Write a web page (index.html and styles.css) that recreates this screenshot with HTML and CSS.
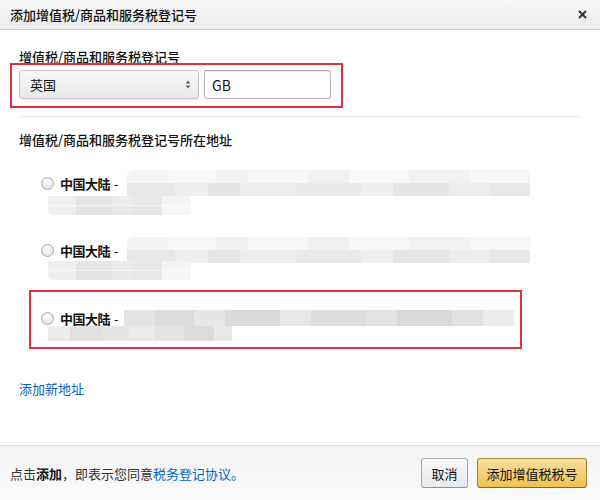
FILE: index.html
```html
<!DOCTYPE html>
<html lang="zh-CN">
<head>
<meta charset="utf-8">
<title>添加增值税/商品和服务税登记号</title>
<link rel="stylesheet" href="styles.css">
</head>
<body>
<div class="dialog">
  <div class="header">
    <span class="title">添加增值税/商品和服务税登记号</span>
    <svg class="close" width="9" height="9" viewBox="0 0 9 9"><path d="M1 1L8 8M8 1L1 8" stroke="#333" stroke-width="2" fill="none"/></svg>
  </div>
  <div class="content">
    <div class="label">增值税/商品和服务税登记号</div>
    <div class="mark row">
      <div class="select">
        <span>英国</span>
        <svg width="6" height="9" viewBox="0 0 6 9"><path d="M3 0.5L5.5 3.5H0.5Z M3 8.5L5.5 5.5H0.5Z" fill="#666"/></svg>
      </div>
      <div class="input">GB</div>
    </div>
    <div class="sep"></div>
    <div class="label label2">增值税/商品和服务税登记号所在地址</div>

    <div class="addr a1">
      <div class="line1"><span class="radio"></span><b class="name">中国大陆</b><span class="dash">-</span><span class="blur b1"></span></div>
      <div class="line2"><span class="blur b2"></span></div>
    </div>
    <div class="addr a2">
      <div class="line1"><span class="radio"></span><b class="name">中国大陆</b><span class="dash">-</span><span class="blur b1"></span></div>
      <div class="line2"><span class="blur b2 b2b"></span></div>
    </div>
    <div class="mark mark2">
      <div class="addr a3">
        <div class="line1"><span class="radio"></span><b class="name">中国大陆</b><span class="dash">-</span><span class="blur b3"></span></div>
        <div class="line2"><span class="blur b4"></span></div>
      </div>
    </div>
    <a class="link addnew">添加新地址</a>
  </div>
  <div class="footer">
    <div class="note">点击<b>添加</b>，即表示您同意<a class="link">税务登记协议。</a></div>
    <div class="buttons">
      <span class="btn cancel">取消</span>
      <span class="btn primary">添加增值税税号</span>
    </div>
  </div>
</div>
</body>
</html>
```
FILE: styles.css
```css
html, body {
  margin: 0;
  padding: 0;
  background: #fff;
}
body {
  font-family: "Noto Sans CJK SC", "Liberation Sans", sans-serif;
  font-size: 13px;
  color: #111;
}
.dialog {
  width: 600px;
  height: 500px;
  display: flex;
  flex-direction: column;
}
.header {
  height: 29px;
  flex: none;
  display: flex;
  align-items: center;
  justify-content: space-between;
  padding: 0 13px 0 10px;
  background: linear-gradient(#f7f7f7, #ececec);
  border-bottom: 1px solid #cfcfcf;
}
.title {
  font-size: 13px;
  line-height: 16px;
  color: #111;
  font-weight: 500;
}
.content {
  flex: 1;
  padding: 20px 20px 0 19px;
  display: flex;
  flex-direction: column;
  align-items: flex-start;
}
.label {
  font-size: 13px;
  line-height: 13px;
  height: 13px;
  font-weight: 500;
}
.mark {
  border: 2px solid #e0313a;
}
.row {
  margin-left: -9px;
  display: flex;
  gap: 5px;
  padding: 5px 10px 7px 7px;
}
.select {
  width: 180px;
  height: 29px;
  box-sizing: border-box;
  border: 1px solid #c6c6c6;
  border-radius: 3px;
  background: linear-gradient(#f8f8f8, #e9e9e9);
  box-shadow: 0 1px 0 rgba(0,0,0,0.06);
  display: flex;
  align-items: center;
  justify-content: space-between;
  padding: 0 7px 0 10px;
}
.input {
  width: 127px;
  height: 29px;
  box-sizing: border-box;
  border: 1px solid #b8b8b8;
  border-top-color: #a6a6a6;
  border-radius: 3px;
  box-shadow: inset 0 1px 1px rgba(0,0,0,0.08);
  background: #fff;
  display: flex;
  align-items: center;
  padding-left: 7px;
  font-size: 14px;
}
.sep {
  align-self: stretch;
  height: 1px;
  background: #e7e7e7;
  margin-top: 8px;
}
.label2 {
  margin-top: 16px;
}
.addr {
  display: flex;
  flex-direction: column;
  margin-left: 22px;
}
.a1 { margin-top: 24px; }
.a2 { margin-top: 22px; }
.line1 {
  display: flex;
  align-items: center;
  height: 26px;
}
.radio {
  width: 11px;
  height: 11px;
  border-radius: 50%;
  border: 1px solid #a9a9a9;
  background: radial-gradient(circle at 50% 35%, #fdfdfd, #dcdcdc);
  flex: none;
}
.name {
  margin-left: 6px;
  font-weight: 700;
  font-size: 13px;
  letter-spacing: -0.5px;
}
.dash {
  margin-left: 4px;
  margin-right: 8px;
}
.line2 {
  margin-left: 7px;
  display: flex;
}
.blur {
  display: block;
}
.b1 {
  width: 403px;
  height: 26px;
  border-radius: 6px 0 0 0;
  background:
    linear-gradient(90deg, #f3f3f3 0 10%, #f7f7f7 10% 22%, #f1f1f1 22% 30%, #f6f6f6 30% 45%, #f0f0f0 45% 55%, #f7f7f7 55% 70%, #f2f2f2 70% 85%, #f6f6f6 85%) top/100% 50% no-repeat,
    linear-gradient(90deg, #e8e8e8 0 12%, #eeeeee 12% 20%, #e6e6e6 20% 28%, #ededed 28% 42%, #eaeaea 42% 58%, #efefef 58% 66%, #e6e6e6 66% 80%, #ededed 80% 90%, #e8e8e8 90%) bottom/100% 50% no-repeat;
}
.b2 {
  width: 142px;
  height: 19px;
  background:
    linear-gradient(90deg, #eeeeee 0 20%, #e5e5e5 20% 45%, #ececec 45% 60%, #e8e8e8 60% 80%, #f3f3f3 80%) top/100% 50% no-repeat,
    linear-gradient(90deg, #efefef 0 20%, #e4e4e4 20% 45%, #eaeaea 45% 60%, #e7e7e7 60% 80%, #f5f5f5 80%) bottom/100% 50% no-repeat;
  border-radius: 0 0 0 6px;
}
.b2b {
  margin-top: -2px;
}
.mark2 {
  margin-top: 10px;
  margin-left: 10px;
  width: 489px;
  padding: 18px 0 6px 0;
}
.a3 {
  margin-left: 10px;
}
.mark2 .line1 {
  height: 16px;
}
.b3 {
  width: 390px;
  height: 16px;
  margin-left: -3px;
  background: linear-gradient(90deg, #e4e4e4 0 8%, #dcdcdc 8% 18%, #e6e6e6 18% 26%, #dadada 26% 40%, #e7e7e7 40% 48%, #dddddd 48% 62%, #e3e3e3 62% 70%, #d9d9d9 70% 84%, #e1e1e1 84% 92%, #ebebeb 92%);
}
.b4 {
  width: 184px;
  height: 15px;
  background: linear-gradient(90deg, #ececec 0 12%, #e0e0e0 12% 30%, #e6e6e6 30% 44%, #ececec 44% 58%, #e4e4e4 58% 74%, #dbdbdb 74% 90%, #e8e8e8 90%);
}
.link {
  color: #0066c0;
  text-decoration: none;
}
.addnew {
  margin-top: 32px;
  font-size: 13px;
  line-height: 16px;
}
.footer {
  height: 55px;
  flex: none;
  box-sizing: border-box;
  border-top: 1px solid #dddddd;
  background: linear-gradient(#f3f3f3, #fafafa);
  display: flex;
  align-items: center;
  justify-content: space-between;
  padding: 0 13px 0 10px;
}
.note {
  font-size: 13px;
  color: #333;
}
.note b {
  color: #111;
}
.buttons {
  display: flex;
  gap: 9px;
}
.btn {
  height: 30px;
  box-sizing: border-box;
  display: flex;
  align-items: center;
  justify-content: center;
  border-radius: 3px;
  font-size: 13px;
  color: #111;
  border: 1px solid;
}
.cancel {
  width: 47px;
  background: linear-gradient(#f7f8fa, #e7e9ec);
  border-color: #adb1b8 #a2a6ac #8d9096;
}
.primary {
  width: 110px;
  background: linear-gradient(#f7dfa5, #f0c14b);
  border-color: #a88734 #9c7e31 #846a29;
}
```
